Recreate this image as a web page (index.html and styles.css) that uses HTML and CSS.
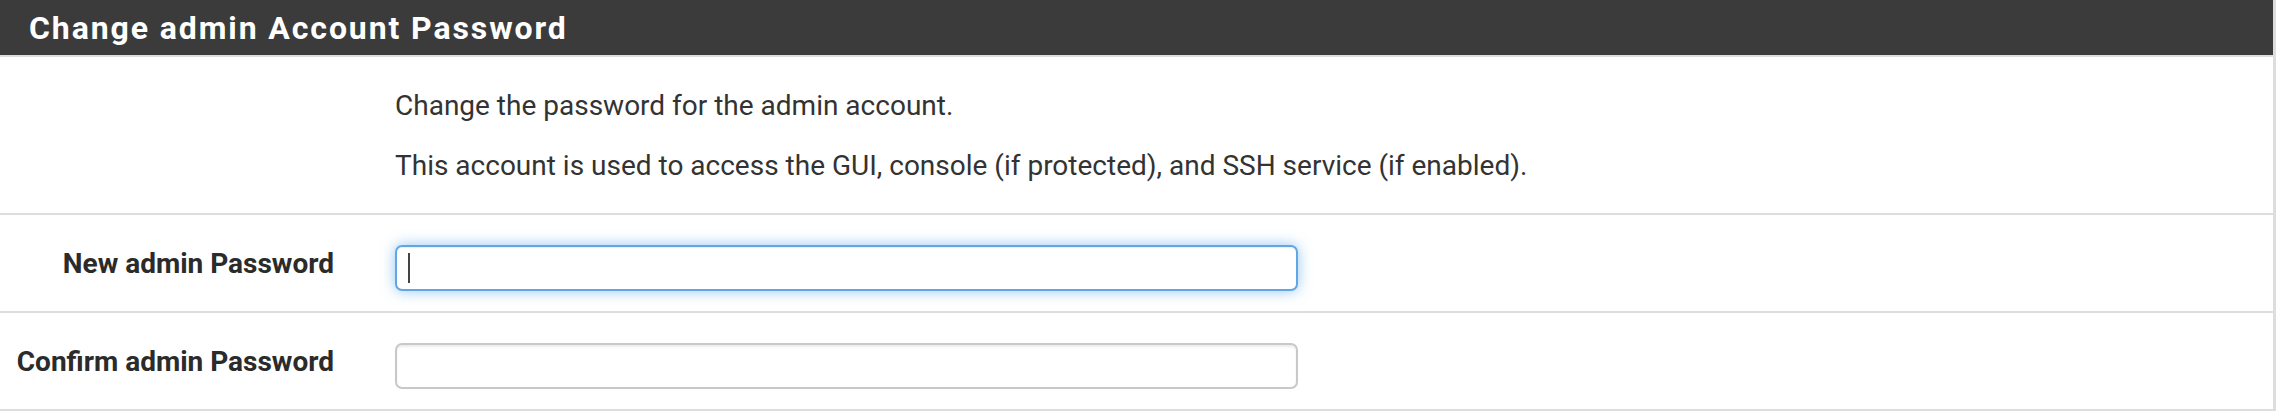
FILE: index.html
```html
<!DOCTYPE html>
<html lang="en">
<head>
<meta charset="utf-8">
<title>Change admin Account Password</title>
<link rel="stylesheet" href="styles.css">
</head>
<body>
<div class="panel">
  <div class="panel-heading">
    <h2 class="panel-title">Change admin Account Password</h2>
  </div>
  <div class="panel-body">
    <div class="form-row desc-row">
      <div class="label-col"></div>
      <div class="field-col">
        <p>Change the password for the admin account.</p>
        <p>This account is used to access the GUI, console (if protected), and SSH service (if enabled).</p>
      </div>
    </div>
    <div class="form-row input-row">
      <label class="label-col" for="pw1">New admin Password</label>
      <div class="field-col">
        <div class="input-wrap">
          <input id="pw1" class="form-control focused" type="password">
          <span class="caret"></span>
        </div>
      </div>
    </div>
    <div class="form-row input-row">
      <label class="label-col" for="pw2">Confirm admin Password</label>
      <div class="field-col">
        <div class="input-wrap">
          <input id="pw2" class="form-control" type="password">
        </div>
      </div>
    </div>
  </div>
</div>
</body>
</html>
```

FILE: styles.css
```css
html, body {
  margin: 0;
  padding: 0;
  background: #ffffff;
}

body {
  font-family: Roboto, "Liberation Sans", sans-serif;
  color: #333333;
  width: 2276px;
  height: 414px;
  overflow: hidden;
}

.panel {
  border-right: 3px solid #dddddd;
  box-sizing: border-box;
}

.panel-heading {
  background: #3b3b3b;
  height: 55px;
  padding-left: 29px;
  display: flex;
  align-items: center;
  border-bottom: 2px solid #dddddd;
}

.panel-title {
  margin: 0;
  color: #ffffff;
  font-size: 32px;
  font-weight: 700;
  letter-spacing: 1.9px;
  line-height: 1;
}

.form-row {
  display: grid;
  grid-template-columns: 334px 1fr;
  column-gap: 61px;
  border-bottom: 2px solid #dddddd;
}

.desc-row {
  padding: 29px 0;
  height: 158px;
  box-sizing: border-box;
}

.desc-row p {
  margin: 0 0 20px;
  font-size: 28px;
  line-height: 40px;
  white-space: nowrap;
}

.desc-row p:last-child {
  margin-bottom: 0;
}

.input-row {
  height: 96px;
  align-items: start;
}

.label-col {
  align-self: center;
  text-align: right;
  font-weight: 700;
  font-size: 28px;
  color: #2b2b2b;
}

.input-wrap {
  position: relative;
  margin-top: 30px;
  width: 903px;
}

.form-control {
  display: block;
  width: 903px;
  height: 46px;
  box-sizing: border-box;
  border: 2px solid #c8c8c8;
  border-radius: 7px;
  background: #ffffff;
  box-shadow: inset 0 2px 2px rgba(0, 0, 0, 0.075);
  outline: none;
  padding: 0 12px;
  margin: 0;
}

.form-control.focused {
  border-color: #62a6e6;
  box-shadow: inset 0 1px 1px rgba(0, 0, 0, 0.075), 0 0 14px rgba(102, 175, 233, 0.7);
}

.caret {
  position: absolute;
  left: 13px;
  top: 8px;
  width: 2px;
  height: 30px;
  background: #444444;
}
```
